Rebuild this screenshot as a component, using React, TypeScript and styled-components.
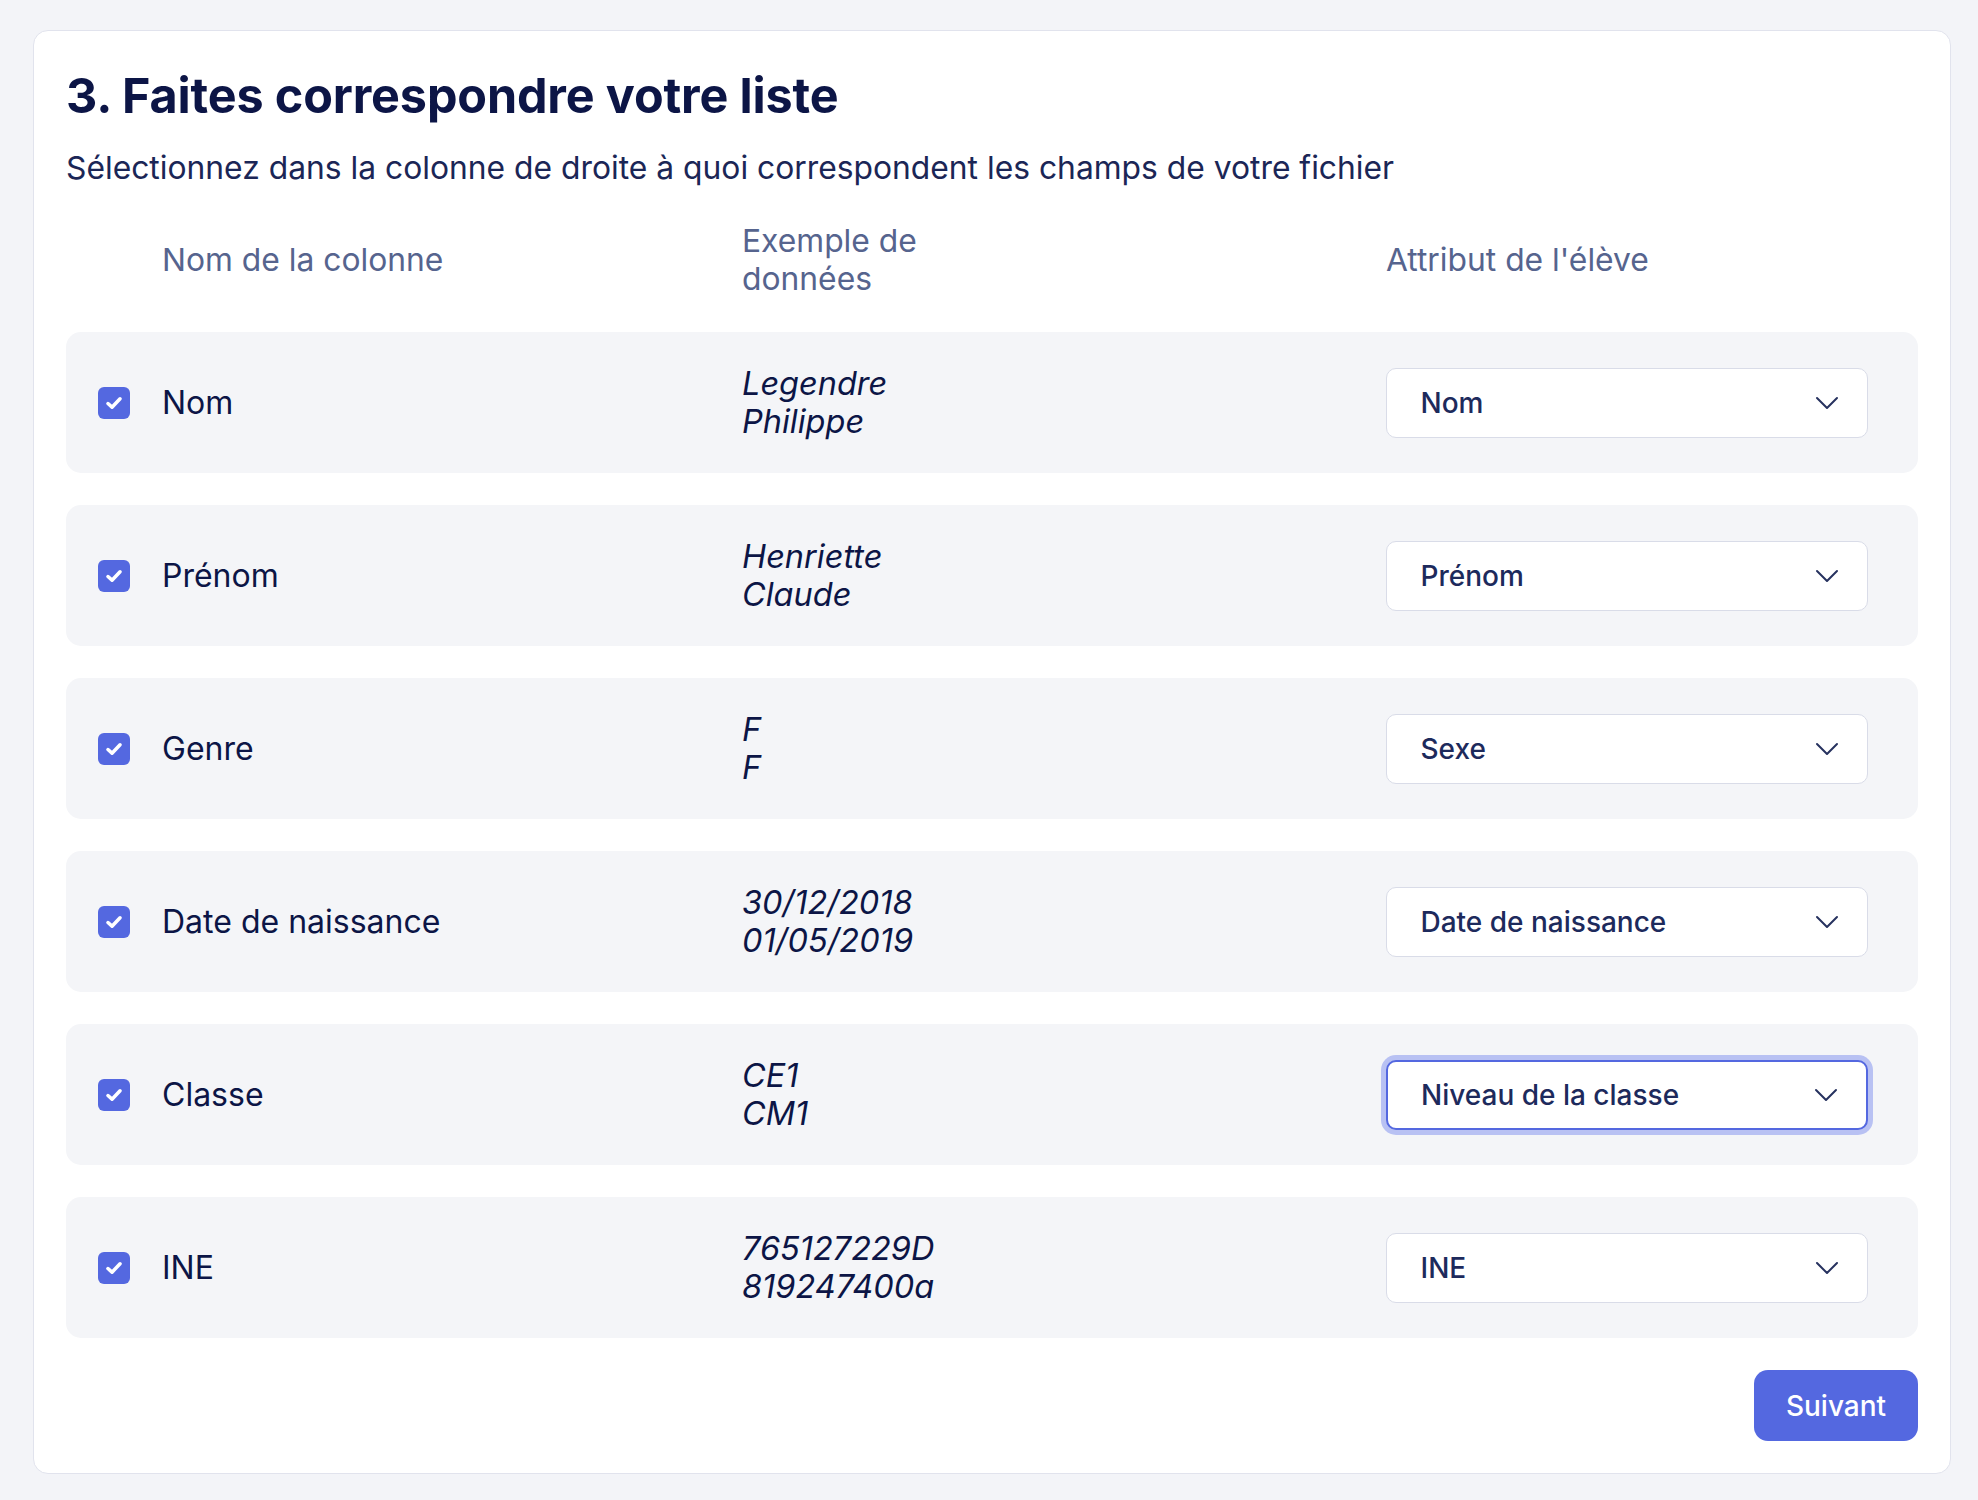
import React from "react";
import styled, { createGlobalStyle } from "styled-components";

const Global = createGlobalStyle`
  html, body { margin: 0; padding: 0; background: #f3f4f8; }
  body { font-family: Inter, "Noto Sans", "Liberation Sans", sans-serif; -webkit-font-smoothing: antialiased; }
  * { box-sizing: border-box; }
`;

const Page = styled.div`
  padding: 30px 27px 27px 33px;
`;

const Card = styled.section`
  background: #ffffff;
  border: 1.5px solid #e1e3ed;
  border-radius: 15px;
  padding: 41px 32px 32px 32px;
`;

const Title = styled.h1`
  margin: 0;
  font-size: 48.5px;
  line-height: 48px;
  font-weight: 700;
  color: #0c1546;
  letter-spacing: -0.15px;
`;

const Subtitle = styled.p`
  margin: 28px 0 0 0;
  font-size: 31.8px;
  line-height: 40px;
  color: #1b2656;
`;

const GRID = "644px 644px 482px";

const HeaderRow = styled.div`
  display: grid;
  grid-template-columns: ${GRID};
  align-items: center;
  padding: 0 32px;
  margin-top: 34px;
  margin-bottom: 34px;
`;

const HeaderCell = styled.div<{ $indent?: boolean; $narrow?: boolean }>`
  font-size: 31.8px;
  line-height: 38px;
  color: #56648e;
  padding-left: ${(p) => (p.$indent ? "64px" : "0")};
  max-width: ${(p) => (p.$narrow ? "220px" : "none")};
`;

const Rows = styled.div`
  display: flex;
  flex-direction: column;
  gap: 32px;
`;

const Row = styled.div`
  display: grid;
  grid-template-columns: ${GRID};
  align-items: center;
  height: 141px;
  padding: 0 32px;
  background: #f4f5f8;
  border-radius: 15px;
`;

const NameCell = styled.label`
  display: flex;
  align-items: center;
  gap: 32px;
  font-size: 32px;
  color: #0c1546;
`;

const Check = styled.span`
  width: 32px;
  height: 32px;
  border-radius: 6px;
  background: #5468e0;
  display: inline-flex;
  align-items: center;
  justify-content: center;
  flex: none;
`;

const Example = styled.div`
  font-size: 32.5px;
  line-height: 38px;
  font-style: italic;
  color: #0c1546;
`;

const Select = styled.div<{ $focused?: boolean }>`
  height: 70px;
  background: #ffffff;
  border: ${(p) => (p.$focused ? "2px solid #5468e0" : "1.5px solid #d9dce8")};
  box-shadow: ${(p) => (p.$focused ? "0 0 0 5px #b8c1f3" : "none")};
  border-radius: 10px;
  display: flex;
  align-items: center;
  justify-content: space-between;
  padding: 0 28px 0 ${(p) => (p.$focused ? "33px" : "33.5px")};
  font-size: 28px;
  font-weight: 500;
  color: #1d2a5c;
`;

const Footer = styled.div`
  display: flex;
  justify-content: flex-end;
  margin-top: 32px;
`;

const Button = styled.button`
  width: 164px;
  height: 71px;
  border: none;
  border-radius: 14px;
  background: #5468e0;
  color: #ffffff;
  font-family: inherit;
  font-size: 28px;
  font-weight: 500;
  cursor: pointer;
`;

const CheckIcon = () => (
  <svg width="22" height="22" viewBox="0 0 20 20" fill="none">
    <path d="M4.5 10.5 L8.2 13.8 L15.5 6.2" stroke="#fff" strokeWidth="3.2" strokeLinecap="round" strokeLinejoin="round" />
  </svg>
);

const Chevron = () => (
  <svg width="24" height="14" viewBox="0 0 24 14" fill="none">
    <path d="M2 2 L12 12 L22 2" stroke="#27325f" strokeWidth="2" strokeLinecap="round" strokeLinejoin="round" />
  </svg>
);

const data = [
  { name: "Nom", ex: ["Legendre", "Philippe"], attr: "Nom" },
  { name: "Prénom", ex: ["Henriette", "Claude"], attr: "Prénom" },
  { name: "Genre", ex: ["F", "F"], attr: "Sexe" },
  { name: "Date de naissance", ex: ["30/12/2018", "01/05/2019"], attr: "Date de naissance" },
  { name: "Classe", ex: ["CE1", "CM1"], attr: "Niveau de la classe", focused: true },
  { name: "INE", ex: ["765127229D", "819247400a"], attr: "INE" },
];

export default function App() {
  return (
    <>
      <Global />
      <Page>
        <Card>
          <Title>3. Faites correspondre votre liste</Title>
          <Subtitle>
            Sélectionnez dans la colonne de droite à quoi correspondent les champs de votre fichier
          </Subtitle>
          <HeaderRow>
            <HeaderCell $indent>Nom de la colonne</HeaderCell>
            <HeaderCell $narrow>Exemple de données</HeaderCell>
            <HeaderCell>Attribut de l'élève</HeaderCell>
          </HeaderRow>
          <Rows>
            {data.map((r) => (
              <Row key={r.name}>
                <NameCell>
                  <Check>
                    <CheckIcon />
                  </Check>
                  {r.name}
                </NameCell>
                <Example>
                  {r.ex[0]}
                  <br />
                  {r.ex[1]}
                </Example>
                <Select $focused={r.focused}>
                  <span>{r.attr}</span>
                  <Chevron />
                </Select>
              </Row>
            ))}
          </Rows>
          <Footer>
            <Button>Suivant</Button>
          </Footer>
        </Card>
      </Page>
    </>
  );
}
